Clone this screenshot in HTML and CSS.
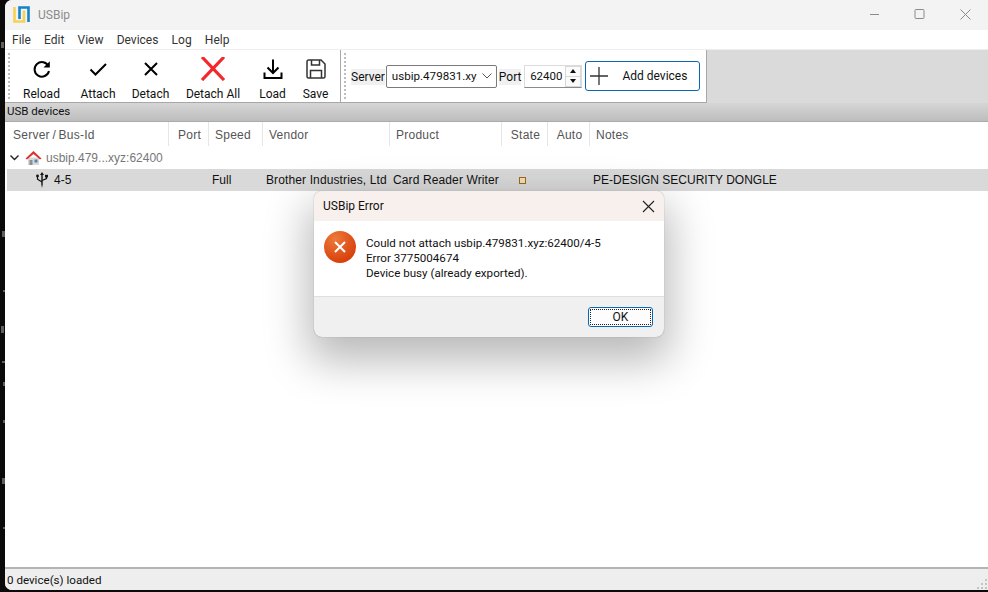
FILE: index.html
```html
<!DOCTYPE html>
<html lang="en">
<head>
    <meta charset="UTF-8">
    <title>USBip</title>
    <link rel="stylesheet" href="styles.css">
</head>
<body>
    <!-- bits of whatever is behind the window, left edge -->
    <svg class="behind" width="5" height="592" viewBox="0 0 5 592" fill="#5e5e5e">
        <rect x="1" y="42" width="3" height="6"/>
        <rect x="2" y="231" width="3" height="6"/>
        <rect x="3" y="290" width="2" height="2"/>
        <rect x="1" y="326" width="3" height="7"/>
        <rect x="2" y="361" width="3" height="2"/>
        <rect x="3" y="382" width="2" height="4"/>
        <rect x="3" y="420" width="2" height="3"/>
        <rect x="2" y="478" width="3" height="6"/>
        <rect x="3" y="527" width="2" height="2"/>
    </svg>

    <div class="window">
        <div class="titlebar">
            <svg class="logo" width="17" height="17" viewBox="0 0 17 17">
                <path d="M1.500 1v14.500h9.500V4.500" fill="none" stroke="#f7d154" stroke-width="2.600"/>
                <path d="M6.500 13V1.500h9V16" fill="none" stroke="#1583c6" stroke-width="2.600"/>
            </svg>
            <span class="app-name">USBip</span>
            <div class="win-buttons">
                <svg width="11" height="11" viewBox="0 0 11 11"><path d="M2 5.500h9" stroke="#8a8a8a" fill="none"/></svg>
                <svg width="11" height="11" viewBox="0 0 11 11"><rect x="1" y=".5" width="9" height="9" rx="1" stroke="#8a8a8a" fill="none"/></svg>
                <svg width="11" height="11" viewBox="0 0 11 11"><path d="M.5.500l10 10M10.500.500l-10 10" stroke="#8a8a8a" fill="none"/></svg>
            </div>
        </div>

        <div class="menubar">
            <span>File</span><span>Edit</span><span>View</span><span>Devices</span><span>Log</span><span>Help</span>
        </div>

        <div class="toolstrip">
            <div class="toolbar">
                <div class="grip"></div>
                <div class="tool tool-reload">
                    <svg width="24" height="24" viewBox="0 0 24 24"><path d="M18.500 9.200A7.300 7.300 0 1 0 19 14" fill="none" stroke="#000" stroke-width="2"/><path d="M19.800 4.200v6.300h-6.300z" fill="#000"/></svg>
                    <span>Reload</span>
                </div>
                <div class="tool tool-attach">
                    <svg width="24" height="24" viewBox="0 0 24 24"><path d="M4.500 12.500l5 5L20 7" fill="none" stroke="#000" stroke-width="2"/></svg>
                    <span>Attach</span>
                </div>
                <div class="tool tool-detach">
                    <svg width="24" height="24" viewBox="0 0 24 24"><path d="M6 6l12 12M18 6L6 18" fill="none" stroke="#000" stroke-width="2"/></svg>
                    <span>Detach</span>
                </div>
                <div class="tool tool-detach-all">
                    <svg width="26" height="24" viewBox="0 0 26 24"><path d="M2 0l22 23M24 0L2 23" fill="none" stroke="#f4272c" stroke-width="3.200"/></svg>
                    <span>Detach All</span>
                </div>
                <div class="tool tool-load">
                    <svg width="24" height="24" viewBox="0 0 24 24"><path d="M12 2.500v13M6.500 10.500l5.500 5.500 5.500-5.500" fill="none" stroke="#000" stroke-width="2"/><path d="M3.500 15.500v5.500h17v-5.500" fill="none" stroke="#000" stroke-width="2"/></svg>
                    <span>Load</span>
                </div>
                <div class="tool tool-save">
                    <svg width="24" height="24" viewBox="0 0 24 24"><path d="M3 4.500a1.500 1.500 0 0 1 1.500-1.500H17l4 4v12.500a1.500 1.500 0 0 1-1.500 1.500h-15A1.500 1.500 0 0 1 3 19.500z" fill="none" stroke="#333" stroke-width="1.500"/><path d="M7.500 3v5h8V3M6.500 21v-7.500h11V21" fill="none" stroke="#333" stroke-width="1.500"/></svg>
                    <span>Save</span>
                </div>
            </div>
            <div class="toolbar server-bar">
                <div class="grip"></div>
                <span class="field-label">Server</span>
                <div class="combo">
                    <span class="combo-text">usbip.479831.xyz</span>
                    <svg width="10" height="6" viewBox="0 0 10 6"><path d="M.5.500L5 5 9.500.500" fill="none" stroke="#555"/></svg>
                </div>
                <span class="field-label port-label">Port</span>
                <div class="spin">
                    <span class="spin-value">62400</span>
                    <div class="spin-arrows">
                        <div class="spin-btn"><i class="arrow-up"></i></div>
                        <div class="spin-btn"><i class="arrow-down"></i></div>
                    </div>
                </div>
                <div class="add-btn">
                    <svg width="20" height="20" viewBox="0 0 20 20"><path d="M10 1v18M1 10h18" stroke="#333" stroke-width="1.300" fill="none"/></svg>
                    <span>Add devices</span>
                </div>
            </div>
        </div>

        <div class="dock-title">USB devices</div>

        <div class="devices">
            <div class="cols head">
                <div class="first-head">Server / Bus-Id</div><div class="mid">Port</div><div>Speed</div><div>Vendor</div><div>Product</div><div class="mid">State</div><div class="mid">Auto</div><div>Notes</div>
            </div>
            <div class="server-row">
                <svg width="9" height="6" viewBox="0 0 9 6"><path d="M.5.500l4 4 4-4" fill="none" stroke="#222" stroke-width="1.400"/></svg>
                <svg class="house" width="17" height="16" viewBox="0 0 17 16">
                    <path d="M3 7.500h11V15H3z" fill="#d8d8d8"/>
                    <path d="M9.500 9.500h3v3h-3z" fill="#4c86b8"/>
                    <path d="M4.500 10h3v5h-3z" fill="#8a8f94"/>
                    <path d="M.5 8.500L8.500 1l8 7.500-1.500 1-6.500-5.500L2 9.500z" fill="#d9352c"/>
                </svg>
                <span>usbip.479...xyz:62400</span>
            </div>
            <div class="cols device-row">
                <div class="bus-id">
                    <svg width="12" height="16" viewBox="0 0 12 16">
                        <path d="M6 0L4 3h1.300v9.500l.7 3.500.7-3.500V3H8z" fill="#111"/>
                        <path d="M1.500 4.500v2.700L6 10M10.500 4.500v2L6 8.500" fill="none" stroke="#111" stroke-width="1.200"/>
                        <circle cx="1.500" cy="4" r="1.400" fill="#111"/>
                        <rect x="9" y="2.800" width="3" height="2.600" fill="#111"/>
                    </svg>
                    <span>4-5</span>
                </div>
                <div></div>
                <div>Full</div>
                <div class="spaced">Brother Industries, Ltd</div>
                <div class="spaced">Card Reader Writer</div>
                <div class="state-cell"><i class="state-dot"></i></div>
                <div></div>
                <div>PE-DESIGN SECURITY DONGLE</div>
            </div>
        </div>

        <div class="statusbar">
            <span>0 device(s) loaded</span>
            <svg class="size-grip" width="11" height="11" viewBox="0 0 11 11" fill="#c4c4c4">
                <rect x="8" y="0" width="2" height="2"/><rect x="4" y="4" width="2" height="2"/><rect x="8" y="4" width="2" height="2"/>
                <rect x="0" y="8" width="2" height="2"/><rect x="4" y="8" width="2" height="2"/><rect x="8" y="8" width="2" height="2"/>
            </svg>
        </div>
    </div>

    <div class="dialog">
        <div class="dialog-title">
            <span>USBip Error</span>
            <svg width="13" height="13" viewBox="0 0 13 13"><path d="M1 1l11 11M12 1L1 12" stroke="#222" stroke-width="1.100" fill="none"/></svg>
        </div>
        <div class="dialog-body">
            <div class="error-icon">
                <svg width="14" height="14" viewBox="0 0 14 14"><path d="M2 2l10 10M12 2L2 12" stroke="#fff" stroke-width="2" fill="none"/></svg>
            </div>
            <div class="dialog-text">
                <div>Could not attach usbip.479831.xyz:62400/4-5</div>
                <div>Error 3775004674</div>
                <div>Device busy (already exported).</div>
            </div>
        </div>
        <div class="dialog-foot">
            <div class="ok-btn"><span>OK</span></div>
        </div>
    </div>
</body>
</html>
```

FILE: styles.css
```css
html, body {
    margin: 0;
    height: 592px;
    overflow: hidden;
}
body {
    background: #0a0a0a;
    padding-left: 5px;
    box-sizing: border-box;
    font-family: Roboto, sans-serif;
    font-size: 12px;
    color: #111;
}
.behind {
    position: absolute;
    left: 0;
    top: 0;
}
.window {
    height: 590px;
    background: #fff;
    border-radius: 7px 0 0 7px;
    overflow: hidden;
    display: flex;
    flex-direction: column;
}
.titlebar {
    height: 30px;
    flex: none;
    background: #f3f3f3;
    display: flex;
    align-items: center;
    padding-left: 8px;
}
.logo {
    margin-top: -1px;
}
.app-name {
    margin-left: 8px;
    color: #8b8b8b;
}
.win-buttons {
    margin-left: auto;
    display: flex;
    gap: 35px;
    padding-right: 17px;
    margin-top: -2px;
}
.menubar {
    height: 19px;
    flex: none;
    display: flex;
    align-items: center;
    gap: 13.200px;
    padding-left: 7px;
    color: #333;
    padding-top: 1px;
    box-sizing: border-box;
}
.toolstrip {
    height: 54px;
    flex: none;
    background: #dadada;
    border-top: 1px solid #eee;
    box-sizing: border-box;
    display: flex;
}
.toolbar {
    background: #fff;
    display: flex;
    border-bottom: 1px solid #a8a8a8;
    border-right: 1px solid #a8a8a8;
}
.grip {
    width: 0;
    height: 46px;
    margin: 3px 0 0 3px;
    border-left: 2px dotted #bdbdbd;
}
.tool {
    display: flex;
    flex-direction: column;
    align-items: center;
    padding-top: 7px;
    gap: 5px;
    line-height: 16px;
    white-space: nowrap;
}
.tool svg {
    display: block;
}
.tool-reload { width: 61px; margin-left: 1px; }
.tool-attach { width: 52px; }
.tool-detach { width: 53px; }
.tool-detach-all { width: 72px; }
.tool-load { width: 47px; }
.tool-save { width: 39px; margin-right: 5px; }
.server-bar {
    width: 366px;
    align-items: center;
    box-sizing: border-box;
}
.server-bar .grip {
    align-self: flex-start;
    flex: none;
}
.field-label {
    background: #f0f0f0;
    margin-left: 5px;
    line-height: 16px;
    margin-top: 1px;
}
.combo {
    width: 111px;
    height: 23px;
    margin-left: 1px;
    border: 1px solid #7a7a7a;
    border-radius: 2px;
    box-sizing: border-box;
    display: flex;
    align-items: center;
    padding: 0 4px 0 5px;
    gap: 5px;
}
.combo-text {
    width: 85px;
    overflow: hidden;
    white-space: nowrap;
    font-size: 11.600px;
}
.port-label {
    margin-left: 2px;
}
.spin {
    width: 58px;
    height: 23px;
    margin-left: 3px;
    background: #fff;
    border: 1px solid #dcdcdc;
    border-bottom-color: #8a8a8a;
    box-sizing: border-box;
    display: flex;
    align-items: center;
}
.spin-value {
    width: 37px;
    text-align: right;
    font-size: 11.500px;
}
.spin-arrows {
    margin-left: auto;
    width: 16px;
    height: 100%;
    display: flex;
    flex-direction: column;
    gap: 1px;
    background: #d8d8d8;
    padding: 1px;
    box-sizing: border-box;
}
.spin-btn {
    flex: 1;
    background: #fbfbfb;
    display: flex;
    align-items: center;
    justify-content: center;
}
.arrow-up, .arrow-down {
    display: block;
    border-left: 3px solid transparent;
    border-right: 3px solid transparent;
}
.arrow-up { border-bottom: 4px solid #111; }
.arrow-down { border-top: 4px solid #111; }
.add-btn {
    width: 115px;
    height: 30px;
    margin-left: 3px;
    border: 1px solid #0a67b5;
    border-radius: 3px;
    box-sizing: border-box;
    display: flex;
    align-items: center;
    padding-left: 3px;
    gap: 13px;
    white-space: nowrap;
    flex: none;
}
.dock-title {
    height: 19px;
    flex: none;
    line-height: 16px;
    padding-left: 2px;
    background: linear-gradient(#d6d6d6, #bdbdbd);
    border-bottom: 1px solid #ababab;
    box-sizing: border-box;
    font-size: 11.500px;
}
.devices {
    flex: 1;
    font-family: "Liberation Sans", sans-serif;
    padding-left: 3px;
}
.cols {
    display: grid;
    grid-template-columns: 161px 40px 54px 127px 112px 46px 42px 1fr;
}
.head {
    height: 26px;
    line-height: 26px;
    color: #555;
    letter-spacing: .25px;
}
.head > div {
    padding-left: 6px;
    border-right: 1px solid #e6e6e6;
    height: 24px;
    white-space: nowrap;
}
.head > div.first-head {
    padding-left: 5px;
    word-spacing: -1px;
}
.head > div.mid {
    padding-left: 2px;
    text-align: center;
}
.head > div:last-child {
    border-right: 0;
}
.server-row {
    height: 21px;
    display: flex;
    align-items: center;
    padding: 0 0 2px 2px;
    box-sizing: border-box;
    color: #777;
}
.house {
    margin-left: 6px;
    margin-right: 4px;
}
.device-row {
    height: 22px;
    margin-left: -1px;
    background: #d9d9d9;
    line-height: 22px;
    white-space: nowrap;
    color: #111;
}
.device-row > div {
    padding-left: 4px;
}
.device-row > div.spaced {
    letter-spacing: .12px;
}
.device-row > div.bus-id {
    display: flex;
    align-items: center;
    padding-left: 29px;
    gap: 6px;
}
.device-row > div.state-cell {
    display: flex;
    align-items: center;
    padding-left: 18px;
}
.state-dot {
    width: 5px;
    height: 5px;
    border: 1px solid #9a6a20;
    background: #f2dfb0;
}
.statusbar {
    height: 23px;
    flex: none;
    background: #eee;
    border-top: 2px solid #b4b4b8;
    box-sizing: border-box;
    display: flex;
    align-items: center;
    padding: 1px 0 0 2px;
    position: relative;
    font-size: 11.600px;
}
.size-grip {
    position: absolute;
    right: 0;
    bottom: 0;
}
.dialog {
    position: absolute;
    left: 314px;
    top: 191px;
    width: 350px;
    height: 146px;
    border-radius: 8px;
    overflow: hidden;
    background: #f0f0f0;
    box-shadow: 0 0 1px 0 #777, 0 18px 44px 6px rgba(0, 0, 0, .28);
    display: flex;
    flex-direction: column;
}
.dialog-title {
    height: 30px;
    flex: none;
    background: #f7f0ec;
    display: flex;
    align-items: center;
    justify-content: space-between;
    padding: 0 9px;
}
.dialog-body {
    height: 76px;
    flex: none;
    background: #fff;
    border-bottom: 1px solid #dfdfdf;
    box-sizing: border-box;
    display: flex;
    padding: 10px 0 0 10px;
}
.error-icon {
    width: 32px;
    height: 32px;
    border-radius: 50%;
    background: radial-gradient(circle at 35% 25%, #ee7a3a, #d8400c 75%);
    display: flex;
    align-items: center;
    justify-content: center;
}
.dialog-text {
    margin-left: 10px;
    padding-top: 5px;
    line-height: 15px;
    white-space: nowrap;
    font-size: 11.600px;
}
.dialog-foot {
    flex: 1;
    display: flex;
    justify-content: flex-end;
    align-items: flex-start;
    padding: 10px 11px 0 0;
}
.ok-btn {
    width: 65px;
    height: 20px;
    border: 1px solid #0a67b5;
    border-radius: 3px;
    box-sizing: border-box;
    background: #fdfdfd;
    padding: 1px;
    display: flex;
}
.ok-btn span {
    flex: 1;
    border: 1px dotted #222;
    text-align: center;
    line-height: 14px;
}
```
